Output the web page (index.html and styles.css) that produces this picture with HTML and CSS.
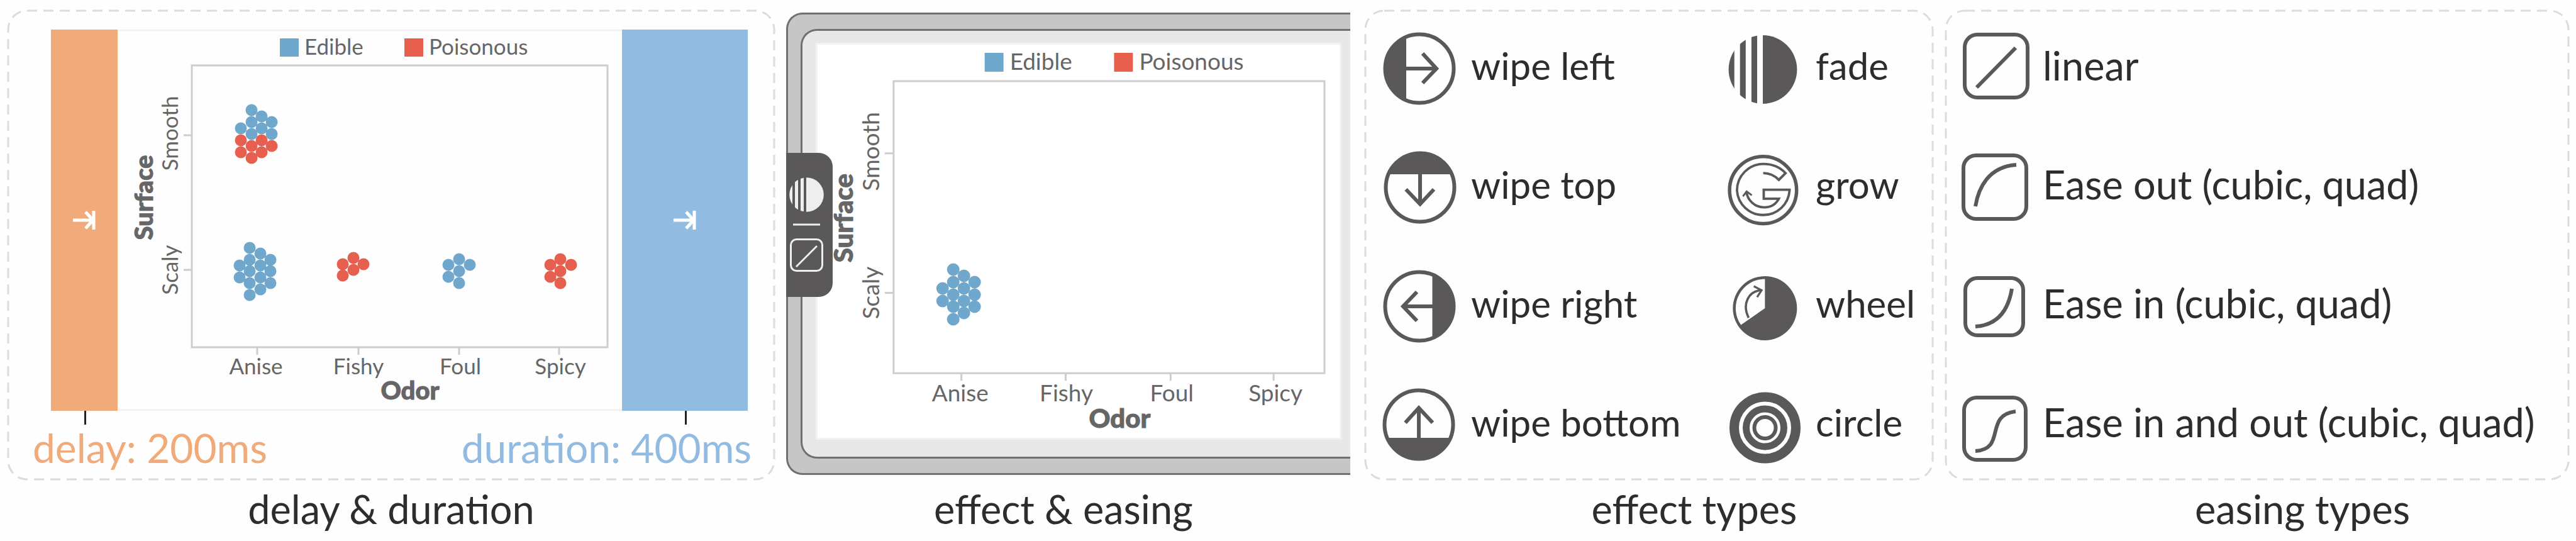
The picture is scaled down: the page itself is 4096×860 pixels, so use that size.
FILE: index.html
```html
<!DOCTYPE html>
<html lang="en">
<head>
<meta charset="utf-8">
<title>Animation staging</title>
<link rel="stylesheet" href="styles.css">
</head>
<body>
<main class="figure">

  <figure class="panel">
    <div class="stage">
      <svg class="outline" aria-hidden="true"><rect/></svg>
      <div class="timeline">
        <div class="block delay">
          <svg class="enter" viewBox="0 0 36 30" aria-hidden="true"><path d="M0 15H32M20 2L32 15L20 28" /><path d="M33 0V30"/></svg>
        </div>
        <svg class="chart small" viewBox="187 47 802 606" role="img" aria-label="Mushrooms by odor and surface">
          <path class="edge" d="M187 48H989M187 652H989"/>
          <rect class="edible" x="445" y="61" width="30" height="29"/>
          <text x="484" y="87">Edible</text>
          <rect class="poison" x="643" y="61" width="30" height="29"/>
          <text x="682" y="87">Poisonous</text>
          <path class="axis" d="M305 104H966V552H305ZM292 215H305M292 429H305M409 552V564M570 552V564M730 552V564M889 552V564"/>
          <g class="mid">
            <text x="407" y="595">Anise</text>
            <text x="570" y="595">Fishy</text>
            <text x="732" y="595">Foul</text>
            <text x="891" y="595">Spicy</text>
            <text transform="translate(283 212) rotate(-90)">Smooth</text>
            <text transform="translate(283 429) rotate(-90)">Scaly</text>
            <text class="title" transform="translate(243 314) rotate(-90)">Surface</text>
            <text class="title" x="652" y="635">Odor</text>
          </g>
          <path class="dots blue" d="M400 175h0M416 185h0M400 194h0M432 194h0M383 204h0M416 204h0M400 213h0M432 213h0
            M397 394h0M414 403h0M397 413h0M430 413h0M381 422h0M414 422h0M397 431h0M430 431h0M381 441h0M414 441h0M397 450h0M430 450h0M414 460h0M397 469h0
            M730 412h0M713 421h0M747 421h0M730 431h0M713 440h0M730 450h0"/>
          <path class="dots red" d="M383 223h0M416 223h0M400 232h0M432 232h0M383 242h0M416 242h0M400 251h0
            M562 410h0M545 420h0M578 420h0M562 429h0M545 438h0
            M891 412h0M875 421h0M908 421h0M891 431h0M875 440h0M891 450h0"/>
        </svg>
        <div class="block duration">
          <svg class="enter" viewBox="0 0 36 30" aria-hidden="true"><path d="M0 15H32M20 2L32 15L20 28" /><path d="M33 0V30"/></svg>
        </div>
      </div>
      <div class="times">
        <span class="delay-text">delay: 200ms</span>
        <span class="duration-text">duration: 400ms</span>
      </div>
    </div>
    <figcaption>delay &amp; duration</figcaption>
  </figure>

  <figure class="panel">
    <div class="stage">
      <div class="device">
        <div class="bezel">
          <div class="screen">
            <svg class="chart large" viewBox="1300 70 831 626" role="img" aria-label="Chart with only one group revealed">
              <rect class="edible" x="1566" y="83" width="30" height="30"/>
              <text x="1606" y="110">Edible</text>
              <rect class="poison" x="1772" y="83" width="30" height="30"/>
              <text x="1812" y="110">Poisonous</text>
              <path class="axis" d="M1421 128H2107V593H1421ZM1407 243H1421M1407 465H1421M1529 593V605M1695 593V605M1862 593V605M2026 593V605"/>
              <g class="mid">
                <text x="1527" y="638">Anise</text>
                <text x="1696" y="638">Fishy</text>
                <text x="1864" y="638">Foul</text>
                <text x="2029" y="638">Spicy</text>
                <text transform="translate(1398 240) rotate(-90)">Smooth</text>
                <text transform="translate(1398 465) rotate(-90)">Scaly</text>
                <text class="title" transform="translate(1356 346) rotate(-90)">Surface</text>
                <text class="title" x="1781" y="680">Odor</text>
              </g>
              <path class="dots blue" d="M1516 428h0M1533 438h0M1516 448h0M1550 448h0M1499 458h0M1533 458h0M1516 468h0M1550 468h0M1499 478h0M1533 478h0M1516 487h0M1550 487h0M1533 497h0M1516 507h0"/>
            </svg>
          </div>
        </div>
        <div class="tab">
          <svg class="tab-icons" viewBox="1251 243 73 229" aria-hidden="true">
            <clipPath id="tab-fade"><path d="M1256 280h5v60h-5zM1265 280h5v60h-5zM1274 280h5v60h-5zM1283 280h30v60h-30z"/></clipPath>
            <circle cx="1283.5" cy="309.5" r="27.3" clip-path="url(#tab-fade)" fill="#eee"/>
            <path d="M1262 357h43M1267 424L1300 391" fill="none" stroke="#eee" stroke-width="3"/>
            <rect x="1258.5" y="380.5" width="50" height="50" rx="9" fill="none" stroke="#eee" stroke-width="3"/>
          </svg>
        </div>
      </div>
    </div>
    <figcaption class="pull-left">effect &amp; easing</figcaption>
  </figure>

  <figure class="panel">
    <div class="stage">
      <svg class="outline" aria-hidden="true"><rect/></svg>
      <ul class="list effects">
        <li>
          <svg class="icon" viewBox="0 0 116 116" aria-hidden="true">
            <clipPath id="cut-left"><path d="M0 0H37V116H0z"/></clipPath>
            <circle class="solid" cx="58" cy="58" r="56" clip-path="url(#cut-left)"/>
            <circle cx="58" cy="58" r="54.5"/><path d="M37 58H85M63 34L85 58L63 81"/>
          </svg><span>wipe left</span>
        </li>
        <li>
          <svg class="icon" viewBox="0 0 116 116" aria-hidden="true">
            <clipPath id="bars"><path d="M0 0h10.7v116H0zM19.7 0h9.1v116h-9.1zM37.9 0h9.1v116h-9.1zM56 0h60v116H56z"/></clipPath>
            <circle class="solid" cx="56" cy="59.5" r="54.4" clip-path="url(#bars)"/>
          </svg><span>fade</span>
        </li>
        <li>
          <svg class="icon" viewBox="0 0 116 116" aria-hidden="true">
            <clipPath id="cut-top"><path d="M0 0H116V37H0z"/></clipPath>
            <circle class="solid" cx="59" cy="58" r="56" clip-path="url(#cut-top)"/>
            <circle cx="59" cy="58" r="54.5"/><path d="M59 37V85M36.500 61L59 84.500L81 61"/>
          </svg><span>wipe top</span>
        </li>
        <li>
          <svg class="icon" viewBox="0 0 116 116" aria-hidden="true">
            <g transform="translate(-10.4 -4.2) scale(.2107)">
              <circle cx="317" cy="315" r="253" stroke-width="26"/>
              <path stroke-width="18" d="M318 187C365 187 405 207 436 238L487 187C445 143 386 118 320 118A200 200 0 0 0 120 318A199 199 0 0 0 517 318V312H322V380H436C415 420 375 445 325 445C255 445 195 390 193 325"/>
              <path stroke-width="14" d="M165 362L193 325L232 354"/>
            </g>
          </svg><span>grow</span>
        </li>
        <li>
          <svg class="icon" viewBox="0 0 116 116" aria-hidden="true">
            <clipPath id="cut-right"><path d="M78.500 0H116V116H78.500z"/></clipPath>
            <circle class="solid" cx="58" cy="58" r="56" clip-path="url(#cut-right)"/>
            <circle cx="58" cy="58" r="54.5"/><path d="M79 58H31M54 35L32 58L54 81"/>
          </svg><span>wipe right</span>
        </li>
        <li>
          <svg class="icon" viewBox="0 0 116 116" aria-hidden="true">
            <g transform="translate(-10.4 -5.6) scale(.2107)">
              <circle class="solid" cx="331" cy="316" r="242"/>
              <path fill="#fefefe" stroke="none" d="M331 316V95A221 221 0 0 0 150 442Z"/>
              <path stroke-width="17" d="M208 388C155 280 210 188 302 180"/>
              <path stroke-width="15" d="M247 150L306 180L272 232"/>
            </g>
          </svg><span>wheel</span>
        </li>
        <li>
          <svg class="icon" viewBox="0 0 116 116" aria-hidden="true">
            <clipPath id="cut-bottom"><path d="M0 78H116V116H0z"/></clipPath>
            <circle class="solid" cx="57" cy="57" r="56" clip-path="url(#cut-bottom)"/>
            <circle cx="57" cy="57" r="54.5"/><path d="M57 78V31M35.500 54L57 30.500L79 54"/>
          </svg><span>wipe bottom</span>
        </li>
        <li>
          <svg class="icon" viewBox="0 0 116 116" aria-hidden="true">
            <circle cx="59.5" cy="62" r="49" stroke-width="15"/>
            <circle cx="59.5" cy="62" r="30" stroke-width="11"/>
            <circle cx="59.5" cy="62" r="17" stroke-width="6"/>
          </svg><span>circle</span>
        </li>
      </ul>
    </div>
    <figcaption class="push-right">effect types</figcaption>
  </figure>

  <figure class="panel">
    <div class="stage">
      <svg class="outline" aria-hidden="true"><rect/></svg>
      <ul class="list easings">
        <li><svg class="icon" viewBox="0 0 116 116" aria-hidden="true"><rect x="8" y="4" width="100" height="100" rx="20"/><path d="M27 88L89 25"/></svg><span>linear</span></li>
        <li><svg class="icon" viewBox="0 0 116 116" aria-hidden="true"><rect x="6" y="7" width="100" height="101" rx="20"/><path d="M25 88C30 58 46 25 90 22"/></svg><span>Ease out (cubic, quad)</span></li>
        <li><svg class="icon" viewBox="0 0 116 116" aria-hidden="true"><rect x="9" y="13" width="92" height="91" rx="19"/><path d="M25 90C59 88 77 66 83 30"/></svg><span>Ease in (cubic, quad)</span></li>
        <li><svg class="icon" viewBox="0 0 116 116" aria-hidden="true"><rect x="7" y="14" width="98" height="99" rx="20"/><path d="M25 99C75 96 38 42 89 36"/></svg><span>Ease in and out (cubic, quad)</span></li>
      </ul>
    </div>
    <figcaption class="push-right">easing types</figcaption>
  </figure>

</main>
</body>
</html>
```

FILE: styles.css
```css
* { box-sizing: border-box; }

body {
  margin: 0;
  background: #fefefe;
  color: #2d2d2d;
  font-family: Lato, "Liberation Sans", sans-serif;
}

.figure {
  display: grid;
  grid-template-columns: 1222fr 902fr 906fr 994fr;
  column-gap: 17px;
  padding: 15px 10px 0 11px;
}

.panel {
  display: flex;
  flex-direction: column;
  min-width: 0;
  margin: 0;
}

.stage {
  position: relative;
  flex: 1;
}

.outline {
  position: absolute;
  inset: 0;
  width: 100%;
  height: 100%;
}

.outline rect {
  x: 2px;
  y: 2px;
  width: calc(100% - 4px);
  height: calc(100% - 4px);
  rx: 30px;
  fill: none;
  stroke: #dcdcdc;
  stroke-width: 3px;
  stroke-dasharray: 16 10;
}

figcaption {
  margin-top: 8px;
  font-size: 63px;
  line-height: 74px;
  text-align: center;
  white-space: nowrap;
}

.pull-left { padding-right: 20px; }
.push-right { padding-left: 144px; }

/* Timeline panel */
.timeline {
  display: flex;
  padding: 32px 44px 0 70px;
}

.block {
  position: relative;
  display: flex;
  align-items: center;
  justify-content: center;
}

.block::after {
  content: "";
  position: absolute;
  top: 100%;
  left: 50%;
  width: 3px;
  height: 22px;
  background: #222;
}

.delay { flex: 0 0 106px; background: #f1ab7a; }
.duration { flex: 0 0 200px; background: #92bbe1; }

.enter {
  width: 36px;
  height: 30px;
  fill: none;
  stroke: #fff;
  stroke-width: 5px;
}

.times {
  position: relative;
  display: flex;
  justify-content: space-between;
  margin-top: 20px;
  padding: 0 38px 14px 41px;
  font-size: 64px;
  line-height: 77px;
}

.delay-text { color: #f1ab7a; }
.duration-text { color: #92bbe1; }

/* Charts */
.chart {
  display: block;
  flex: 1;
  min-width: 0;
  width: 100%;
  fill: #666;
}

.small { font-size: 35px; }
.large { font-size: 37px; }
.small .title { font-size: 40px; }
.large .title { font-size: 42px; }

.title {
  font-weight: 900;
  stroke: #666;
  stroke-width: 1px;
}

.mid { text-anchor: middle; }
.edible { fill: #70a7cc; }
.poison { fill: #e75f4e; }
.edge { stroke: #f1f1f1; stroke-width: 3px; }
.axis { fill: none; stroke: #cdcdcd; stroke-width: 3px; }

.dots {
  fill: none;
  stroke-width: 19px;
  stroke-linecap: round;
}

.large .dots { stroke-width: 20px; }
.blue { stroke: #70a7cc; }
.red { stroke: #e75f4e; }

/* Device panel */
.device {
  position: relative;
  margin: 5px 5px 0 0;
  padding: 23px 0 23px 20px;
  background: #c6c6c6;
  border: 3px solid #707070;
  border-right: 0;
  border-radius: 26px 0 0 26px;
}

.bezel {
  padding: 19px 14px 27px 21px;
  background: #e8e8e8;
  border: 3px solid #707070;
  border-right: 0;
  border-radius: 26px 0 0 26px;
}

.screen {
  background: #fff;
  border: 3px solid #f2f2f2;
}

.tab {
  position: absolute;
  top: 220px;
  left: -3px;
  width: 74px;
  background: #5a5858;
  border-radius: 0 22px 22px 0;
}

.tab-icons {
  display: block;
  width: 73px;
}

/* Icon lists */
.list {
  position: relative;
  display: grid;
  row-gap: 73px;
  margin: 0;
  list-style: none;
  line-height: 72px;
}

.list li {
  display: flex;
  align-items: center;
  white-space: nowrap;
}

.list span { padding-bottom: 10px; }

.effects {
  grid-template-columns: 548fr 328fr;
  padding: 36px 0 0 30px;
  font-size: 60px;
}

.effects li { gap: 24px; }

.easings {
  padding: 36px 0 0 24px;
  font-size: 63px;
}

.easings li { gap: 16px; }

.icon {
  flex: none;
  width: 116px;
  height: 116px;
  overflow: visible;
  fill: none;
  stroke: #5a5858;
  stroke-width: 6px;
}

.solid { fill: #5a5858; stroke: none; }
```
